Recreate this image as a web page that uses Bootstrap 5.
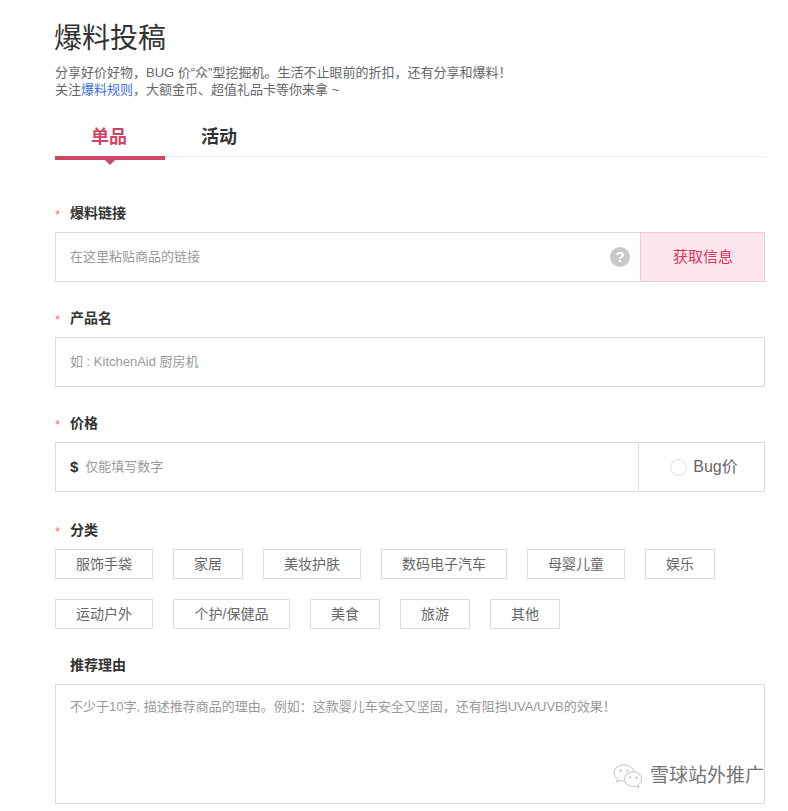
<!DOCTYPE html>
<html lang="zh">
<head>
<meta charset="utf-8">
<title>爆料投稿</title>
<link href="https://cdn.jsdelivr.net/npm/bootstrap@5.3.0/dist/css/bootstrap.min.css" rel="stylesheet">
<style>
html,body{height:811px;overflow:hidden}
body{background:#fff;font-family:"Liberation Sans","Noto Sans CJK SC",sans-serif;color:#333;position:relative}
.page-wrap{padding:19px 23px 0 55px;width:788px}
.page-title{font-size:28px;line-height:40px;font-weight:400;color:#333;margin:0 0 5px -1px}
.page-desc{font-size:13px;line-height:17px;color:#666;margin:0}
.page-desc a{color:#3d6fe0;text-decoration:none}
.tab-bar{margin-top:21px;border-bottom:1px solid #eee;height:38px;flex-wrap:nowrap}
.tab-item{width:110px;height:38px;line-height:36px;text-align:center;font-size:18px;font-weight:700;color:#333;padding:0 2px 0 0;position:relative}
.tab-item:hover{color:#333}
.tab-item.on{color:#cf4566;border-bottom:4px solid #cf4566;height:41px}
.tab-item.on::after{content:"";position:absolute;left:50%;bottom:-9px;margin-left:-5px;border:5px solid transparent;border-bottom:0;border-top-color:#cf4566}
.field-label{font-size:14px;line-height:20px;font-weight:700;color:#333;margin:0 0 9px;display:flex;align-items:center}
.req{width:15px;color:#f0776f;font-weight:400;font-size:13px;padding-top:3px;line-height:17px}
.no-req{width:15px}
.fld1{margin-top:46px}
.fld{margin-top:26px}
.fld-cat{margin-top:28px}
.box{border:1px solid #dcdcdc;height:50px;display:flex;align-items:stretch;background:#fff}
.box input,.box textarea{border:0;outline:0;flex:1;min-width:0;font-size:13px;color:#333;padding:0 0 0 14px;font-family:inherit;background:transparent}
.box input::placeholder,.box textarea::placeholder{color:#999;opacity:1}
.help-dot{width:20px;height:20px;border-radius:50%;background:#c8c8c8;color:#fff;font-weight:700;font-size:15px;line-height:20px;text-align:center;align-self:center;margin-right:10px;flex:none}
.fetch-btn{width:125px;flex:none;margin:-1px -1px -1px 0;background:#fde6ec;border:1px solid #f7c6d3;color:#e0325f;font-size:15px;border-radius:0;padding:0 0 0 1px}
.fetch-btn:hover{background:#fde6ec;color:#e0325f;border-color:#f7c6d3}
.dollar{font-weight:700;font-size:15px;color:#2b2f3a;align-self:center;margin-left:14px;line-height:20px}
.dollar + input{padding-left:7px}
.bug-cell{width:126px;flex:none;border-left:1px solid #dcdcdc;display:flex;align-items:center;justify-content:center;gap:6px;font-size:16px;color:#666;padding-left:5px}
.bug-radio{width:17px;height:17px;border-radius:50%;border:1px solid #ddd;background:#fff;flex:none}
.tag-list{gap:20px}
.tag-item{border:1px solid #dcdcdc;height:30px;line-height:28px;padding:0 19px;font-size:14px;color:#666;background:#fff;border-radius:0;min-width:70px}
.tag-item.wide4{padding:0 20px}
.tag-item.wide5{width:117px;padding:0}
.tag-item:hover{color:#666;border-color:#dcdcdc}
.area-box{height:120px}
.area-box textarea{padding:12px 14px;resize:none;line-height:20px}
.wm{position:absolute;left:612px;top:763px;display:flex;align-items:center;gap:6px;color:#666;font-size:19px;line-height:26px;opacity:.9}
</style>
</head>
<body>
<div class="page-wrap">
  <h1 class="page-title">爆料投稿</h1>
  <p class="page-desc">分享好价好物，BUG 价“众”型挖掘机。生活不止眼前的折扣，还有分享和爆料！<br>关注<a href="#">爆料规则</a>，大额金币、超值礼品卡等你来拿 ~</p>
  <nav class="nav tab-bar">
    <a class="nav-link tab-item on" href="#">单品</a>
    <a class="nav-link tab-item" href="#">活动</a>
  </nav>
  <form>
    <div class="fld1">
      <label class="field-label"><span class="req">*</span>爆料链接</label>
      <div class="box">
        <input type="text" placeholder="在这里粘贴商品的链接">
        <span class="help-dot">?</span>
        <button type="button" class="btn fetch-btn">获取信息</button>
      </div>
    </div>
    <div class="fld">
      <label class="field-label"><span class="req">*</span>产品名</label>
      <div class="box"><input type="text" placeholder="如 : KitchenAid 厨房机"></div>
    </div>
    <div class="fld">
      <label class="field-label"><span class="req">*</span>价格</label>
      <div class="box">
        <span class="dollar">$</span>
        <input type="text" placeholder="仅能填写数字">
        <div class="bug-cell"><span class="bug-radio"></span>Bug价</div>
      </div>
    </div>
    <div class="fld-cat">
      <label class="field-label"><span class="req">*</span>分类</label>
      <div class="d-flex flex-wrap tag-list">
        <button type="button" class="btn tag-item wide4">服饰手袋</button>
        <button type="button" class="btn tag-item">家居</button>
        <button type="button" class="btn tag-item wide4">美妆护肤</button>
        <button type="button" class="btn tag-item wide4">数码电子汽车</button>
        <button type="button" class="btn tag-item wide4">母婴儿童</button>
        <button type="button" class="btn tag-item">娱乐</button>
        <button type="button" class="btn tag-item wide4">运动户外</button>
        <button type="button" class="btn tag-item wide5">个护/保健品</button>
        <button type="button" class="btn tag-item">美食</button>
        <button type="button" class="btn tag-item">旅游</button>
        <button type="button" class="btn tag-item">其他</button>
      </div>
    </div>
    <div class="fld">
      <label class="field-label"><span class="no-req"></span>推荐理由</label>
      <div class="box area-box"><textarea placeholder="不少于10字, 描述推荐商品的理由。例如：这款婴儿车安全又坚固，还有阻挡UVA/UVB的效果！"></textarea></div>
    </div>
  </form>
</div>
<div class="wm">
  <svg width="32" height="26" viewBox="0 0 32 26" fill="none" stroke="#bbb" stroke-width="1">
    <path d="M12 2C6 2 2 5.500 2 10c0 2.600 1.400 4.600 3.600 6.200L4.800 19l3.200-1.600c1.200.4 2.600.6 4 .6"/>
    <path d="M12 2c5 0 9 2.700 9.800 6.600"/>
    <path d="M21 9c-5 0-8.500 3.200-8.500 7.200s3.500 7.200 8.500 7.200c1 0 2-.2 3-.5l3 1.600-.8-2.700c2.200-1.400 3.300-3.400 3.300-5.600 0-4-3.500-7.200-8.500-7.200z"/>
    <circle cx="8.500" cy="7.500" r="1" fill="#aaa" stroke="none"/><circle cx="15.500" cy="7.500" r="1" fill="#aaa" stroke="none"/>
    <circle cx="18" cy="14.500" r=".9" fill="#aaa" stroke="none"/><circle cx="24.500" cy="14.500" r=".9" fill="#aaa" stroke="none"/>
  </svg>
  <span>雪球站外推广</span>
</div>
</body>
</html>
